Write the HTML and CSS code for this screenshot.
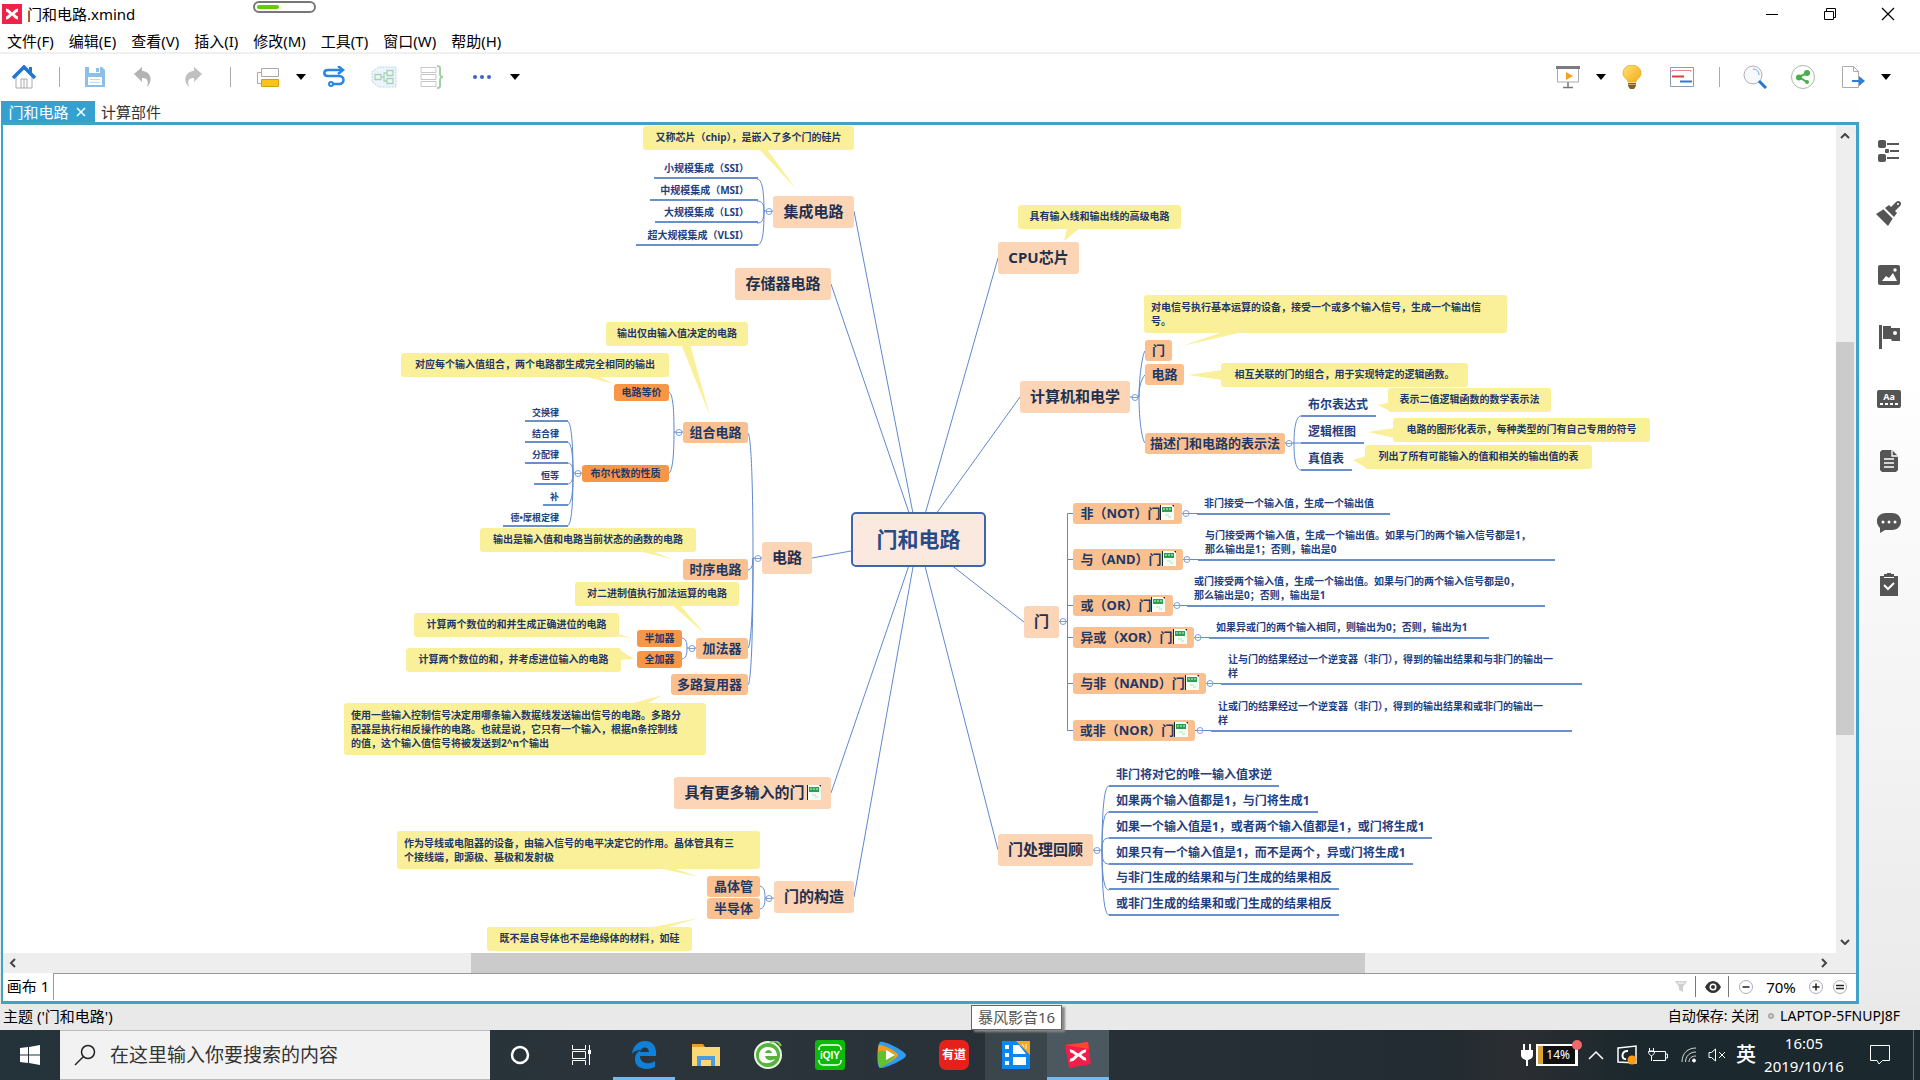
FILE: index.html
```html
<!DOCTYPE html>
<html lang="zh-CN">
<head>
<meta charset="utf-8">
<title>门和电路.xmind</title>
<link rel="stylesheet" href="styles.css">
</head>
<body>
<svg class="defs" width="0" height="0" aria-hidden="true">
  <defs>
    <linearGradient id="bulb" x1="0" y1="0" x2="1" y2="1"><stop offset="0" stop-color="#ffe27a"/><stop offset="1" stop-color="#f5ab12"/></linearGradient>
    <symbol id="sheetIcon" viewBox="0 0 14 15"><path d="M0 0h12l2 2v13H0z" fill="#f4fff6"/><path d="M0 0h1v15H0zM12 0h2v2z" fill="#222"/><path d="M2 2h10v5H2z" fill="#2f9e50"/><path d="M3 4h2M6 4h2M9 4h2" stroke="#d5f5dc"/><path d="M5 10h4M8 12h3" stroke="#b5dfc0"/></symbol>
  </defs>
</svg>

<header class="titlebar">
  <svg class="logo" width="20" height="20" viewBox="0 0 20 20"><path d="M0 0h20v20H0z" fill="#f0224a"/><path d="M4 6c3 0 4 4 6 4s3-4 6-4M4 14c3 0 4-4 6-4s3 4 6 4" fill="none" stroke="#fff" stroke-width="3"/></svg>
  <h1>门和电路.xmind</h1>
  <div class="winctl">
    <button aria-label="最小化"><svg width="14" height="14"><path d="M1 7.500h12" stroke="#000"/></svg></button>
    <button aria-label="还原"><svg width="14" height="14" fill="none" stroke="#000"><path d="M1.500 4.500h9v8h-9zM3.500 4V1.500h9v9h-2"/></svg></button>
    <button aria-label="关闭"><svg width="14" height="14"><path d="M1 1l12 12M13 1L1 13" stroke="#000" stroke-width="1.200"/></svg></button>
  </div>
  <div class="pill"><span></span></div>
</header>

<nav class="menubar">
  <button>文件(F)</button><button>编辑(E)</button><button>查看(V)</button><button>插入(I)</button><button>修改(M)</button><button>工具(T)</button><button>窗口(W)</button><button>帮助(H)</button>
</nav>

<div class="toolbar">
  <button aria-label="主页"><svg width="26" height="24" viewBox="0 0 26 24"><path d="M5 12v11h16V12l-8-8z" fill="#fff" stroke="#aaa"/><path d="M10 23v-9h6v9M13 14v9" fill="none" stroke="#aaa"/><path d="M2 13L13 2l11 11" fill="none" stroke="#1f77d2" stroke-width="3.500"/><path d="M18 2h3v6l-3-3z" fill="#1f77d2"/></svg></button>
  <i class="sep"></i>
  <button aria-label="保存"><svg width="22" height="22" viewBox="0 0 22 22"><path d="M1 1h17l3 3v17H1z" fill="#8dc0e8"/><path d="M5 1h11v6H5zM4 11h14v8H4z" fill="#fff"/><path d="M12 2h3v4h-3z" fill="#8dc0e8"/><path d="M6 13.500h10M6 16.500h10" stroke="#b8d8f0"/></svg></button>
  <button aria-label="撤销"><svg width="22" height="22" viewBox="0 0 22 22"><path d="M2 8l8-7v4c8 0 12 9 5 16 2-7 0-9-5-9v4z" fill="#b3b3b3"/></svg></button>
  <button class="wide" aria-label="重做"><svg width="22" height="22" viewBox="0 0 22 22"><path d="M20 8l-8-7v4C4 5 0 14 7 21c-2-7 0-9 5-9v4z" fill="#c0c0c0"/></svg></button>
  <i class="sep"></i>
  <button class="wide" aria-label="主题"><svg width="24" height="22" viewBox="0 0 24 22"><path d="M5.500 2.500h17v8h-17z" fill="#fff" stroke="#aaa"/><path d="M5 6.500H1.500v11H5" fill="none" stroke="#aaa"/><path d="M5.500 13.500h17v7h-17z" fill="#fcc419" stroke="#d8a00c"/></svg></button>
  <button class="caret" aria-label="主题选项"><svg width="10" height="6"><path d="M0 0h10L5 6z"/></svg></button>
  <button class="wide" aria-label="联系"><svg width="24" height="22" viewBox="0 0 24 22" fill="none" stroke="#2a86e0" stroke-width="2.500"><path d="M20 4H6c-5 0-5 6 0 6h11c6 0 6 8 0 8h-6"/><path d="M16 0l5 4-5 4"/><circle cx="9" cy="18" r="2" fill="#fff" stroke-width="2"/></svg></button>
  <button aria-label="外框"><svg width="26" height="22" viewBox="0 0 26 22"><path d="M1 6l7-5h17v20H8l-7-5z" fill="#edf5fc" stroke="#b7d3ea" stroke-dasharray="2 1"/><path d="M4 8.500h6v5H4zM16 4.500h6v5h-6zM16 12.500h6v5h-6zM10 11h3M16 7h-3v8h3" fill="none" stroke="#a9d3b4" stroke-width="1.300"/></svg></button>
  <button aria-label="概要"><svg width="26" height="24" viewBox="0 0 26 24" fill="none"><path d="M2 2.500h15v5H2zM2 9.500h15v5H2zM2 16.500h15v5H2z" stroke="#c8c8c8"/><path d="M18 1c4 0 3 2 3 6 0 3 0 5 3 5-3 0-3 2-3 5 0 4 1 6-3 6" stroke="#9fd0a2" stroke-width="2"/></svg></button>
  <button class="wide" aria-label="更多"><svg width="20" height="6" fill="#3b62c8"><circle cx="3" cy="3" r="2"/><circle cx="10" cy="3" r="2"/><circle cx="17" cy="3" r="2"/></svg></button>
  <button class="caret" aria-label="更多选项"><svg width="10" height="6"><path d="M0 0h10L5 6z"/></svg></button>
  <span class="grow"></span>
  <button class="wide" aria-label="演示"><svg width="24" height="24" viewBox="0 0 24 24"><path d="M1.500 3h21v14h-21z" fill="#fff" stroke="#aaa"/><path d="M0 1h24v3H0z" fill="#7a7a82"/><path d="M10 7l7 4-7 4z" fill="#f5a21c"/><path d="M12 17v5M7 22.500h10" stroke="#777" stroke-width="1.500"/></svg></button>
  <button class="caret" aria-label="演示选项"><svg width="10" height="6"><path d="M0 0h10L5 6z"/></svg></button>
  <button aria-label="头脑风暴"><svg width="20" height="24" viewBox="0 0 20 24"><path d="M6 17c0-3-5-4-5-9a9 8 0 0 1 18 0c0 5-5 6-5 9z" fill="url(#bulb)" stroke="#e3a21a" stroke-width=".7"/><path d="M6 18h8v3l-2 3H8l-2-3z" fill="#80612a"/><path d="M6 19.500h8" stroke="#c9ac6a"/></svg></button>
  <button class="wide" aria-label="甘特图"><svg width="24" height="22" viewBox="0 0 24 22" fill="none"><path d="M.5 1.500h23v19H.5z" fill="#fff" stroke="#8c9cb0"/><path d="M2 6V4.500h19V6" stroke="#e28a8a"/><path d="M2 10.500h12" stroke="#e23c3c" stroke-width="2"/><path d="M10 15.500h12" stroke="#2b7bd0" stroke-width="2"/></svg></button>
  <i class="sep"></i>
  <button aria-label="搜索"><svg width="24" height="24" viewBox="0 0 24 24" fill="none"><circle cx="10" cy="10" r="9" fill="#f6f9fc" stroke="#b0b0b0"/><path d="M10 4c4 0 6 3 6 6" stroke="#6aa8e4"/><path d="M16 16l7 7" stroke="#1f77d2" stroke-width="3"/></svg></button>
  <button aria-label="分享"><svg width="24" height="24" viewBox="0 0 24 24"><circle cx="12" cy="12" r="11.500" fill="#fff" stroke="#a7b8a7"/><path d="M16 8l-8 4 8 5" fill="none" stroke="#4aae4a" stroke-width="2"/><g fill="#4aae4a"><circle cx="16" cy="8" r="3"/><circle cx="8" cy="12.500" r="3"/><circle cx="16" cy="17" r="2"/></g></svg></button>
  <button class="wide" aria-label="导出"><svg width="24" height="24" viewBox="0 0 24 24"><path d="M1.500 1.500h11l5 5v16h-16z" fill="#fff" stroke="#aaa"/><path d="M12.500 1.500v5h5" fill="none" stroke="#aaa"/><path d="M11 15h7v-4l6 5-6 5v-4h-7z" fill="#2f7fe0"/></svg></button>
  <button class="caret" aria-label="导出选项"><svg width="10" height="6"><path d="M0 0h10L5 6z"/></svg></button>
</div>

<main class="work">
  <div class="editor">
    <div class="tabs">
      <button class="tab on">门和电路<svg width="10" height="10"><path d="M1 1l8 8M9 1L1 9" stroke="#fff" stroke-width="1.500"/></svg></button>
      <button class="tab">计算部件</button>
    </div>
    <div class="frame">
      <div class="viewport">
        <div class="sheet">
          <svg class="links" width="1840" height="960" fill="none" stroke="#5f88cf">
            <path d="M918 539L854 211M918 539L831 284M918 539L812 558M918 539L831 793M918 539L854 897M918 539L998 258M918 539L1020 397M918 539L1024 622M918 539L998 850"/>
            <path d="M773 211h-9M764 211C764 190 762 179 757 179M764 211C764 204 762 201 757 201M764 211C764 220 762 223 757 223M764 211C764 236 762 245 757 245"/>
            <path d="M762 558h-9M753 558C753 480 751 436 748 433M753 558C753 566 751 570 748 570M753 558C753 610 751 645 748 648M753 558C753 640 751 682 748 685"/>
            <path d="M683 432h-9M674 432C674 410 673 394 669 392M674 432C674 452 673 470 669 473"/>
            <path d="M582 473h-9M573 473C573 440 571 421 567 421M573 473C573 452 571 442 567 442M573 473C573 466 571 463 567 463M573 473C573 481 571 484 567 484M573 473C573 496 571 505 567 505M573 473C573 510 571 526 567 526"/>
            <path d="M696 648h-9M687 648C687 642 686 639 682 638M687 648C687 655 686 658 682 659M774 898h-9M765 898C765 891 764 887 760 886M765 898C765 905 764 908 760 909"/>
            <path d="M1130 397h9M1139 397C1139 380 1142 355 1145 351M1139 397C1139 385 1142 378 1145 375M1139 397C1139 420 1142 440 1145 443"/>
            <path d="M1285 443h16M1294 443C1294 428 1296 416 1301 416M1294 443C1294 460 1296 470 1301 470"/>
            <path d="M1059 621.500h8M1073 513.500h-5.500v217h5.500M1067 559.500h6M1067 605.500h6M1067 637.500h6M1067 683.500h6M1182 513.500h22M1183 559.500h22M1173 605.500h22M1194 637.500h22M1206 683.500h22M1195 730.500h22"/>
            <path d="M1093 850h9M1102 850C1102 812 1104 786 1109 786M1102 850C1102 824 1104 812 1109 812M1102 850C1102 841 1104 838 1109 838M1102 850C1102 861 1104 864 1109 864M1102 850C1102 876 1104 890 1109 890M1102 850C1102 890 1104 915 1109 915"/>
            <g class="knobs">
              <path d="M766 211.500a3 3 0 1 0 6 0a3 3 0 1 0-6 0h6M755 558.500a3 3 0 1 0 6 0a3 3 0 1 0-6 0h6M676 432.500a3 3 0 1 0 6 0a3 3 0 1 0-6 0h6M575 473.500a3 3 0 1 0 6 0a3 3 0 1 0-6 0h6M689 648.500a3 3 0 1 0 6 0a3 3 0 1 0-6 0h6M766 898.500a3 3 0 1 0 6 0a3 3 0 1 0-6 0h6"/>
              <path d="M1132 397.500a3 3 0 1 0 6 0a3 3 0 1 0-6 0h6M1286 443.500a3 3 0 1 0 6 0a3 3 0 1 0-6 0h6M1060 621.500a3 3 0 1 0 6 0a3 3 0 1 0-6 0h6M1183 513.500a3 3 0 1 0 6 0a3 3 0 1 0-6 0h6M1184 559.500a3 3 0 1 0 6 0a3 3 0 1 0-6 0h6M1174 605.500a3 3 0 1 0 6 0a3 3 0 1 0-6 0h6M1195 637.500a3 3 0 1 0 6 0a3 3 0 1 0-6 0h6M1207 683.500a3 3 0 1 0 6 0a3 3 0 1 0-6 0h6M1197 730.500a3 3 0 1 0 6 0a3 3 0 1 0-6 0h6M1094 850.500a3 3 0 1 0 6 0a3 3 0 1 0-6 0h6"/>
            </g>
            <path class="tails" d="M759 149l8 0 29 40zM681 344l9 0 20 72zM583 376h14l17 8zM638 551h14l20 8zM672 605h8l25 29zM600 634h18l14 4zM620 650v10l14-1zM630 704h16l17-9zM658 868h15l26 9zM648 928h17l34-10zM1067 228h13l-16 13zM1223 332h20l-61 14zM1222 370v10l-34-5zM1392 402v10l-14-7zM1394 428v10l-26-6zM1366 456v12l-13-8z"/>
          </svg>

          <div class="topic root" style="left:851px;top:512px;width:135px">门和电路</div>

          <div class="note" style="left:643px;top:126px;width:211px">又称芯片（chip），是嵌入了多个门的硅片</div>
          <div class="leaf left" style="left:654px;top:158px;width:104px">小规模集成（SSI）</div>
          <div class="leaf left" style="left:650px;top:180px;width:108px">中规模集成（MSI）</div>
          <div class="leaf left" style="left:655px;top:202px;width:103px">大规模集成（LSI）</div>
          <div class="leaf left" style="left:636px;top:225px;width:122px">超大规模集成（VLSI）</div>
          <div class="topic l1" style="left:773px;top:196px;width:81px">集成电路</div>
          <div class="topic l1" style="left:735px;top:268px;width:96px">存储器电路</div>

          <div class="note" style="left:606px;top:322px;width:142px">输出仅由输入值决定的电路</div>
          <div class="note" style="left:401px;top:353px;width:268px">对应每个输入值组合，两个电路都生成完全相同的输出</div>
          <div class="topic l3" style="left:614px;top:384px;width:55px">电路等价</div>
          <div class="topic l2" style="left:683px;top:422px;width:65px">组合电路</div>
          <div class="topic l3" style="left:582px;top:465px;width:87px">布尔代数的性质</div>
          <div class="leaf left small" style="left:525px;top:404px;width:43px">交换律</div>
          <div class="leaf left small" style="left:525px;top:425px;width:43px">结合律</div>
          <div class="leaf left small" style="left:525px;top:446px;width:43px">分配律</div>
          <div class="leaf left small" style="left:534px;top:467px;width:34px">恒等</div>
          <div class="leaf left small" style="left:543px;top:488px;width:25px">补</div>
          <div class="leaf left small" style="left:503px;top:509px;width:65px">德•摩根定律</div>
          <div class="note" style="left:480px;top:528px;width:216px">输出是输入值和电路当前状态的函数的电路</div>
          <div class="topic l1" style="left:762px;top:542px;width:50px">电路</div>
          <div class="topic l2" style="left:683px;top:559px;width:65px">时序电路</div>
          <div class="note" style="left:575px;top:582px;width:164px">对二进制值执行加法运算的电路</div>
          <div class="note" style="left:414px;top:613px;width:205px">计算两个数位的和并生成正确进位的电路</div>
          <div class="note" style="left:406px;top:648px;width:215px">计算两个数位的和，并考虑进位输入的电路</div>
          <div class="topic l3" style="left:637px;top:630px;width:45px">半加器</div>
          <div class="topic l3" style="left:637px;top:651px;width:45px">全加器</div>
          <div class="topic l2" style="left:696px;top:638px;width:52px">加法器</div>
          <div class="topic l2" style="left:671px;top:674px;width:77px">多路复用器</div>
          <div class="note para" style="left:344px;top:703px;width:362px">使用一些输入控制信号决定用哪条输入数据线发送输出信号的电路。多路分<br>配器是执行相反操作的电路。也就是说，它只有一个输入，根据n条控制线<br>的值，这个输入值信号将被发送到2^n个输出</div>
          <div class="topic l1" style="left:674px;top:777px;width:157px">具有更多输入的门<svg width="14" height="15"><use href="#sheetIcon"/></svg></div>
          <div class="note para" style="left:397px;top:831px;width:363px">作为导线或电阻器的设备，由输入信号的电平决定它的作用。晶体管具有三<br>个接线端，即源极、基极和发射极</div>
          <div class="topic l2" style="left:707px;top:876px;width:53px">晶体管</div>
          <div class="topic l2" style="left:707px;top:898px;width:53px">半导体</div>
          <div class="topic l1" style="left:774px;top:881px;width:80px">门的构造</div>
          <div class="note" style="left:487px;top:927px;width:205px">既不是良导体也不是绝缘体的材料，如硅</div>

          <div class="note" style="left:1018px;top:205px;width:163px">具有输入线和输出线的高级电路</div>
          <div class="topic l1" style="left:998px;top:242px;width:81px">CPU芯片</div>
          <div class="note para" style="left:1144px;top:295px;width:363px">对电信号执行基本运算的设备，接受一个或多个输入信号，生成一个输出信<br>号。</div>
          <div class="topic l2" style="left:1145px;top:340px;width:27px">门</div>
          <div class="topic l2" style="left:1145px;top:364px;width:39px">电路</div>
          <div class="note" style="left:1221px;top:363px;width:247px">相互关联的门的组合，用于实现特定的逻辑函数。</div>
          <div class="topic l1" style="left:1020px;top:381px;width:110px">计算机和电学</div>
          <div class="topic l2" style="left:1145px;top:433px;width:140px">描述门和电路的表示法</div>
          <div class="leaf big" style="left:1301px;top:393px;width:75px">布尔表达式</div>
          <div class="leaf big" style="left:1301px;top:420px;width:63px">逻辑框图</div>
          <div class="leaf big" style="left:1301px;top:447px;width:51px">真值表</div>
          <div class="note" style="left:1388px;top:388px;width:163px">表示二值逻辑函数的数学表示法</div>
          <div class="note" style="left:1393px;top:418px;width:257px">电路的图形化表示，每种类型的门有自己专用的符号</div>
          <div class="note" style="left:1365px;top:445px;width:227px">列出了所有可能输入的值和相关的输出值的表</div>

          <div class="topic l1" style="left:1024px;top:606px;width:35px">门</div>
          <div class="topic l2" style="left:1073px;top:503px;width:109px">非（NOT）门<svg width="14" height="15"><use href="#sheetIcon"/></svg></div>
          <div class="topic l2" style="left:1073px;top:549px;width:110px">与（AND）门<svg width="14" height="15"><use href="#sheetIcon"/></svg></div>
          <div class="topic l2" style="left:1073px;top:595px;width:100px">或（OR）门<svg width="14" height="15"><use href="#sheetIcon"/></svg></div>
          <div class="topic l2" style="left:1073px;top:627px;width:121px">异或（XOR）门<svg width="14" height="15"><use href="#sheetIcon"/></svg></div>
          <div class="topic l2" style="left:1073px;top:673px;width:133px">与非（NAND）门<svg width="14" height="15"><use href="#sheetIcon"/></svg></div>
          <div class="topic l2" style="left:1073px;top:720px;width:122px">或非（NOR）门<svg width="14" height="15"><use href="#sheetIcon"/></svg></div>
          <div class="leaf" style="left:1197px;top:494px;width:193px">非门接受一个输入值，生成一个输出值</div>
          <div class="leaf" style="left:1198px;top:526px;width:357px">与门接受两个输入值，生成一个输出值。如果与门的两个输入信号都是1，<br>那么输出是1；否则，输出是0</div>
          <div class="leaf" style="left:1187px;top:572px;width:358px">或门接受两个输入值，生成一个输出值。如果与门的两个输入信号都是0，<br>那么输出是0；否则，输出是1</div>
          <div class="leaf" style="left:1209px;top:618px;width:280px">如果异或门的两个输入相同，则输出为0；否则，输出为1</div>
          <div class="leaf" style="left:1221px;top:650px;width:361px">让与门的结果经过一个逆变器（非门），得到的输出结果和与非门的输出一<br>样</div>
          <div class="leaf" style="left:1211px;top:697px;width:361px">让或门的结果经过一个逆变器（非门），得到的输出结果和或非门的输出一<br>样</div>

          <div class="topic l1" style="left:998px;top:834px;width:95px">门处理回顾</div>
          <div class="leaf big" style="left:1109px;top:763px;width:170px">非门将对它的唯一输入值求逆</div>
          <div class="leaf big" style="left:1109px;top:789px;width:209px">如果两个输入值都是1，与门将生成1</div>
          <div class="leaf big" style="left:1109px;top:815px;width:323px">如果一个输入值是1，或者两个输入值都是1，或门将生成1</div>
          <div class="leaf big" style="left:1109px;top:841px;width:304px">如果只有一个输入值是1，而不是两个，异或门将生成1</div>
          <div class="leaf big" style="left:1109px;top:866px;width:230px">与非门生成的结果和与门生成的结果相反</div>
          <div class="leaf big" style="left:1109px;top:892px;width:230px">或非门生成的结果和或门生成的结果相反</div>
        </div>
      </div>
      <div class="vscroll">
        <svg width="10" height="6"><path d="M1 5l4-4 4 4" fill="none" stroke="#444" stroke-width="2"/></svg>
        <div class="track"><span></span></div>
        <svg width="10" height="6"><path d="M1 1l4 4 4-4" fill="none" stroke="#444" stroke-width="2"/></svg>
      </div>
      <div class="hscroll">
        <svg width="7" height="10"><path d="M6 1L2 5l4 4" fill="none" stroke="#444" stroke-width="2"/></svg>
        <div class="track"><span></span></div>
        <svg width="7" height="10"><path d="M1 1l4 4-4 4" fill="none" stroke="#444" stroke-width="2"/></svg>
      </div>
      <div class="sheetbar">
        <button class="sheettab">画布 1</button>
        <span class="grow"></span>
        <button aria-label="筛选"><svg width="14" height="14"><path d="M1 1h12L9 7v5l-4-2V7z" fill="#d0d0d0"/><path d="M4 3h6" stroke="#fff"/></svg></button>
        <i class="sep"></i>
        <button class="eye" aria-label="显示"><svg width="16" height="12" viewBox="0 0 16 12"><path d="M0 6c4-8 12-8 16 0-4 8-12 8-16 0z" fill="#333"/><circle cx="8" cy="6" r="3.500" fill="#fff"/><circle cx="8" cy="6" r="2" fill="#333"/></svg></button>
        <i class="sep"></i>
        <button class="zoomout" aria-label="缩小"><svg width="14" height="14" fill="none"><circle cx="7" cy="7" r="6.500" stroke="#aab"/><path d="M3.500 7h7" stroke="#222" stroke-width="1.500"/></svg></button>
        <span class="zoom">70%</span>
        <button class="zoomin" aria-label="放大"><svg width="14" height="14" fill="none"><circle cx="7" cy="7" r="6.500" stroke="#aab"/><path d="M3.500 7h7M7 3.500v7" stroke="#222" stroke-width="1.500"/></svg></button>
        <button aria-label="实际大小"><svg width="14" height="14" fill="none"><circle cx="7" cy="7" r="6.500" stroke="#aab"/><path d="M3 5.500h8M3 8.500h8" stroke="#222" stroke-width="1.500"/></svg></button>
      </div>
    </div>
  </div>
  <aside class="side">
    <button aria-label="大纲"><svg width="24" height="24" viewBox="0 0 24 24" fill="#555"><rect x="1" y="1" width="8" height="8" rx="2"/><rect x="1" y="15" width="8" height="8" rx="2"/><rect x="8" y="10" width="4" height="4" rx="1"/><path d="M10 4h12v2H10zM13 11h9v2h-9zM10 18h12v2H10z"/></svg></button>
    <button aria-label="格式"><svg width="26" height="26" viewBox="0 0 26 26" fill="#555"><path d="M8 9l9 9-5 8L0 14z"/><path d="M9 8l4-3 2 2 5-5c3-3 7 1 4 4l-5 5 2 2-3 4z"/><circle cx="22" cy="4" r="1" fill="#fff"/><path d="M8 9l9 9" stroke="#fff" stroke-width="1.300"/></svg></button>
    <button aria-label="图片"><svg width="22" height="20" viewBox="0 0 22 20"><rect width="22" height="20" rx="2" fill="#555"/><path d="M4 16l4-5 3 2 4-5 4 8z" fill="#fff"/><circle cx="17" cy="5" r="1.700" fill="#fff"/></svg></button>
    <button aria-label="图标"><svg width="24" height="24" viewBox="0 0 24 24" fill="#555"><path d="M2 0h3v24H2zM6 1h8v2h9v13h-8l-1-2H6z"/><circle cx="18" cy="8" r="2" fill="#fff"/></svg></button>
    <button aria-label="标签"><svg class="label" width="24" height="18" viewBox="0 0 24 18"><rect width="24" height="18" rx="2" fill="#555"/><text x="12" y="10" text-anchor="middle" fill="#fff">Aa</text><path d="M3 14h18" stroke="#fff" stroke-width="2" stroke-dasharray="3 2"/></svg></button>
    <button aria-label="备注"><svg width="18" height="22" viewBox="0 0 18 22"><path d="M2 0h10l6 6v14l-2 2H2l-2-2V2z" fill="#555"/><path d="M12 0v6h6M4 9h10M4 13h10M4 17h10" fill="none" stroke="#fff" stroke-width="1.300"/></svg></button>
    <button aria-label="批注"><svg width="24" height="20" viewBox="0 0 24 20"><path d="M9 0h6c12 0 12 17 0 17H8l-5 3v-5C-3 9 0 0 9 0z" fill="#555"/><g fill="#fff"><circle cx="6" cy="9" r="1.500"/><circle cx="12" cy="9" r="1.500"/><circle cx="18" cy="9" r="1.500"/></g></svg></button>
    <button aria-label="任务"><svg width="18" height="23" viewBox="0 0 18 23"><path d="M0 3h4V1h3V0h4v1h3v2h4v20H0z" fill="#555"/><path d="M4 4.500h10" stroke="#fff"/><path d="M4 12l4 4 6-6" fill="none" stroke="#fff" stroke-width="2"/></svg></button>
  </aside>
</main>

<footer class="status">
  <span class="current">主题 ('门和电路')</span>
  <span class="grow"></span>
  <span>自动保存: 关闭</span>
  <i class="dot"></i>
  <span>LAPTOP-5FNUPJ8F</span>
</footer>

<div class="taskbar">
  <button class="start" aria-label="开始"><svg width="20" height="20" viewBox="0 0 20 20" fill="#fff"><path d="M0 3l8-1v7.500H0zM9 2l11-2v9.500H9zM0 10.500h8V18l-8-1zM9 10.500h11V20L9 18z"/></svg></button>
  <label class="search"><svg width="22" height="22" viewBox="0 0 22 22" fill="none" stroke="#222" stroke-width="1.500"><circle cx="14" cy="8" r="6.500"/><path d="M9.500 12.500L1 21"/></svg><input type="text" aria-label="搜索" placeholder="在这里输入你要搜索的内容"></label>
  <button class="app" aria-label="Cortana"><svg width="20" height="20"><circle cx="10" cy="10" r="8" fill="none" stroke="#fff" stroke-width="2.500"/></svg></button>
  <button class="app" aria-label="任务视图"><svg width="20" height="20" fill="none" stroke="#fff"><path d="M.5 0v4.500h13V0M.5 20v-4.500h13V20M.5 6.500v7h13v-7zM17.500 0v5M17.500 9v11"/><path d="M16 5h3v4h-3z" fill="#fff" stroke="none"/></svg></button>
  <button class="app open" aria-label="Edge"><svg width="26" height="28" viewBox="0 0 26 28"><path d="M1 13C2 4 8 0 14 0c8 0 12 6 11 15H9c0 8 9 9 15 5v6c-9 4-20 2-20-8 0-5 3-8 7-9-5 0-8 1-10 4zM9 11h9c0-6-8-6-9 0z" fill="#1181d8"/></svg></button>
  <button class="app" aria-label="文件资源管理器"><svg width="28" height="24" viewBox="0 0 28 24"><path d="M0 1h11l2 3H0z" fill="#e2a325"/><path d="M0 4h28v19H0z" fill="#fbd876"/><path d="M5 23V13h18v10h-4v-6H9v6z" fill="#4a9be0"/></svg></button>
  <button class="app" aria-label="浏览器"><svg width="28" height="28" viewBox="0 0 28 28"><circle cx="14" cy="14" r="13" fill="#57b33e" stroke="#e8f8e0" stroke-width="2"/><path d="M5 15c0-6 4-9 9-9s9 3 9 9H11c1 5 6 5 10 3-2 5-16 7-16-3zM11 12h7c-1-4-6-4-7 0z" fill="#fff"/><path d="M16 1c5-2 9 0 11 4" fill="none" stroke="#7ecb4e" stroke-width="2"/></svg></button>
  <button class="app" aria-label="爱奇艺"><svg class="qiy" width="30" height="30" viewBox="0 0 30 30"><rect width="30" height="30" rx="3" fill="#0db90a"/><rect x="4" y="5" width="22" height="20" rx="4" fill="none" stroke="#fff" stroke-width="1.500"/><path d="M2 10h26v10H2z" fill="#0db90a"/><text x="15" y="19" text-anchor="middle" fill="#fff">iQIY</text></svg></button>
  <button class="app" aria-label="腾讯视频"><svg width="30" height="28" viewBox="0 0 30 28"><path d="M3 1c4-2 25 9 26 13S7 28 3 27 0 3 3 1z" fill="#2e9cf0"/><path d="M2 4c4-1 19 7 19 10S5 26 3 26 0 6 2 4z" fill="#f79a1f"/><path d="M2 10c2-1 16 1 16 4S5 27 3 26s-3-14-1-16z" fill="#62c22e"/><path d="M9 9l9 5-9 5z" fill="#fff"/></svg></button>
  <button class="app" aria-label="有道"><svg class="dao" width="30" height="30" viewBox="0 0 30 30"><rect width="30" height="30" rx="7" fill="#e5211c"/><text x="15" y="19" text-anchor="middle" fill="#fff">有道</text></svg></button>
  <button class="app hover" aria-label="暴风影音16"><svg width="28" height="28" viewBox="0 0 28 28"><path d="M0 0h28v28H0z" fill="#0c86f2"/><path d="M3 4h4v4H3zM3 12h4v4H3zM3 20h4v4H3zM11 16h13v8H11zM11 4h6l7 9H11z" fill="#fff"/><path d="M14 0h14v14z" fill="#f6a821"/><path d="M20 3l2 3M24 3v5" stroke="#fff"/></svg></button>
  <button class="app active" aria-label="XMind"><svg width="26" height="26" viewBox="0 0 26 26"><path d="M0 3l23-3 3 22-22 4z" fill="#f01e48"/><path d="M0 3l23-3 1 7z" fill="#ff4432"/><path d="M5 9c4-1 5 4 8 4s4-5 8-4M5 18c4 1 5-4 8-5s4 5 8 4" fill="none" stroke="#fff" stroke-width="3"/></svg></button>
  <div class="tip">暴风影音16</div>
  <span class="grow"></span>
  <div class="battery">
    <svg width="14" height="22" viewBox="0 0 14 22" fill="#fff"><path d="M3 0h2v6h4V0h2v6h2v5c0 3-2 4-5 5v6H6v-6c-3-1-5-2-5-5V6h2z"/></svg>
    <span class="cell">14%</span><i class="alert"></i>
  </div>
  <button class="tray" aria-label="显示隐藏的图标"><svg width="16" height="10" fill="none" stroke="#fff" stroke-width="1.500"><path d="M1 9l7-7 7 7"/></svg></button>
  <button class="tray" aria-label="显卡"><svg width="20" height="20" viewBox="0 0 20 20"><path d="M1 3l18-2v17l-18-1z" fill="none" stroke="#fff" stroke-width="1.500"/><path d="M11 6c-7-1-7 9-2 8" fill="none" stroke="#fff" stroke-width="2"/><circle cx="15" cy="15" r="4.500" fill="#ff9c12"/></svg></button>
  <button class="tray" aria-label="电源"><svg width="20" height="14" viewBox="0 0 20 14" fill="none" stroke="#fff"><path d="M5 3.500h12.500v9H5M18 6h1.500v4H18M1.500 0v3h4V0M.5 3.500h6c0 3-2 4-3 4s-3-1-3-4zM3.500 8v5"/></svg></button>
  <button class="tray" aria-label="网络"><svg width="16" height="16" viewBox="0 0 16 16" fill="none" stroke="#fff"><path d="M1 15C1 6 7 1 15 1M4.500 15C4.500 9 9 5 15 5M8 15c0-4 3-6 7-6" opacity=".8"/><circle cx="13" cy="13.500" r="1.500" fill="#fff"/></svg></button>
  <button class="tray sound" aria-label="音量"><svg width="18" height="14" viewBox="0 0 18 14" fill="none" stroke="#fff"><path d="M1 4.500h2.500L7.500 1v12L3.500 9.500H1zM11 4l6 6M17 4l-6 6"/></svg></button>
  <button class="ime">英</button>
  <div class="clock"><time>16:05</time><time>2019/10/16</time></div>
  <button class="notify" aria-label="通知"><svg width="20" height="20" viewBox="0 0 20 20" fill="none" stroke="#fff"><path d="M.5.500h19v15h-7L9 19l-2-3.500H.5z"/></svg></button>
</div>
</body>
</html>
```
FILE: styles.css
```css
* { box-sizing: border-box; }
body {
  margin: 0;
  height: 100vh;
  display: flex;
  flex-direction: column;
  overflow: hidden;
  background: #fff;
  color: #000;
  font: 15px/20px "Noto Sans", "Noto Sans CJK SC", sans-serif;
}
button { border: 0; padding: 0; margin: 0; background: none; font: inherit; color: inherit; display: flex; align-items: center; justify-content: center; white-space: nowrap; }
svg { display: block; flex: none; }
.defs { position: absolute; }
.grow { flex: 1; }

/* title and menus */
.titlebar { position: relative; display: flex; align-items: center; height: 29px; padding: 0 3px 2px 2px; gap: 5px; flex: none; }
.titlebar h1 { margin: 0; font-size: 15px; font-weight: 400; flex: 1; }
.winctl { display: flex; }
.winctl button { width: 58px; height: 27px; }
.pill { position: absolute; left: 253px; top: 1px; width: 63px; height: 12px; padding: 2px; border: 2px solid #777; border-radius: 6px; background: #fff; }
.pill span { display: block; width: 22px; height: 4px; border-radius: 2px; background: #6c0; }
.menubar { display: flex; gap: 15px; height: 25px; padding-left: 7px; border-bottom: 2px solid #f0f0f0; flex: none; }

/* toolbar */
.toolbar { display: flex; align-items: center; height: 47px; padding: 0 27px 2px 0; flex: none; }
.toolbar button { width: 48px; height: 36px; }
.toolbar .wide { width: 52px; }
.toolbar .caret { width: 14px; }
.toolbar .sep { width: 1px; height: 20px; margin: 0 11px; background: #aaa; }

/* editor */
.work { flex: 1; min-height: 0; display: flex; background: linear-gradient(#fff, #fff 30%, #eaeaea); }
.editor { flex: 1; min-width: 0; display: flex; flex-direction: column; padding-left: 1px; }
.tabs { display: flex; height: 21px; flex: none; color: #333; background: #fefefe; }
.tab { gap: 7px; padding: 0 8px 0 6px; }
.tab.on { background: #35a1d1; color: #fff; width: 94px; }
.frame {
  flex: 1;
  min-height: 0;
  display: grid;
  grid-template: minmax(0, 1fr) 20px 28px / minmax(0, 1fr) 20px;
  border: solid #3ea3c6;
  border-width: 3px 3px 3px 2px;
  background: #fff;
}
.viewport { position: relative; overflow: hidden; }
.vscroll, .hscroll { display: flex; align-items: center; background: #eee; }
.vscroll { flex-direction: column; grid-row: 1 / 3; grid-column: 2; padding: 8px 2px 28px 0; }
.hscroll { grid-row: 2; grid-column: 1; padding: 0 8px 0 6px; }
.track { flex: 1; display: flex; }
.vscroll .track { flex-direction: column; width: 18px; padding: 203px 0 0; }
.vscroll .track span { height: 393px; background: #cbcbcb; }
.hscroll .track { height: 20px; padding-left: 455px; }
.hscroll .track span { width: 894px; background: #cbcbcb; }
.sheetbar { grid-row: 3; grid-column: 1 / 3; display: flex; align-items: center; border-top: 1px solid #999; padding: 0 9px 2px 0; background: #fff; }
.sheetbar .sheettab { width: 51px; height: 27px; margin-top: -1px; background: #fff; border-right: 1px solid #999; }
.sheetbar .sep { width: 1px; height: 21px; background: #777; margin-left: 7px; }
.sheetbar .eye { margin-left: 9px; }
.sheetbar .zoomout { margin-left: 10px; }
.sheetbar .zoom { width: 56px; text-align: center; }
.sheetbar .zoomin { margin-right: 10px; }

/* mind map: the sheet is scrolled inside the viewport */
.sheet { position: absolute; left: -3px; top: -125px; width: 1840px; height: 960px; font-weight: 700; color: #1f3864; white-space: nowrap; }
.links, .topic, .note, .leaf { position: absolute; }
.links { left: 0; top: 0; }
.knobs { fill: #fff; stroke: #7ba0dd; }
.tails { fill: #fbf09a; stroke: none; }
.topic { display: flex; align-items: center; justify-content: center; padding-bottom: 2px; border-radius: 3px; }
.root { height: 55px; font-size: 21px; border: 2px solid #3f66ad; border-radius: 5px; background: #fbe8de; color: #284a86; }
.l1 { height: 32px; gap: 2px; font-size: 15px; background: #fbd5b5; color: #22304f; }
.l2 { height: 21px; font-size: 13px; background: #fac090; }
.l3 { height: 17px; font-size: 10px; background: #f79646; }
.note { padding: 4px 0 6px; border-radius: 3px; background: #fbf09a; font-size: 10px; line-height: 14px; text-align: center; }
.para { padding: 5px 0 5px 7px; text-align: left; }
.leaf { padding: 2px 7px 3px; border-bottom: 2px solid #6a90cc; font-size: 10px; line-height: 14px; color: #1f4080; }
.left { text-align: right; padding: 3px 9px 2px 0; }
.small { padding: 2px 9px 0 0; font-size: 9px; }
.big { padding: 5px 7px 3px; font-size: 12px; }

/* right side panel */
.side { width: 61px; display: flex; flex-direction: column; align-items: center; gap: 21px; padding: 29px 2px 0 0; }
.side button { width: 48px; height: 41px; flex: none; }
.label { font: 700 9px "Noto Sans", sans-serif; }

/* status line */
.status { display: flex; align-items: center; height: 26px; padding: 0 20px 2px 3px; background: #e9e9e9; flex: none; font-size: 14px; }
.current { font-size: 15px; }
.dot { width: 6px; height: 6px; margin: 0 6px 0 9px; border: 2px solid #aaa; border-radius: 50%; }

/* taskbar */
.taskbar { position: relative; display: flex; height: 50px; flex: none; background: linear-gradient(90deg, #243239, #2b343a 40%, #222c32 75%, #2b2e31 79%, #1b282e 85%); color: #fff; }
.start { width: 60px; }
.search { width: 430px; display: flex; align-items: center; gap: 14px; padding-left: 14px; background: #f2f2f2; border: solid #bbb; border-width: 1px 0; }
.search input { flex: 1; min-width: 0; border: 0; outline: 0; background: none; font: 19px/28px "Noto Sans", "Noto Sans CJK SC", sans-serif; padding: 0; }
.search input::placeholder { color: #333; opacity: 1; }
.app { width: 62px; border: solid transparent; border-width: 3px 0; }
.app:nth-of-type(2) { margin-left: -1px; }
.app.open { border-bottom-color: #76b9ed; background-clip: padding-box; }
.app.hover { background: #3b464c; }
.app.active { background: #4b585f; border-bottom-color: #76b9ed; }
.qiy { font: 700 10px "Liberation Sans", sans-serif; }
.dao { font: 700 12px "Noto Sans CJK SC", sans-serif; }
.tip { position: absolute; left: 971px; top: -25px; height: 25px; width: 91px; border: 1px solid #666; background: #fff; color: #555; text-align: center; line-height: 22px; box-shadow: 3px 2px 2px #888; white-space: nowrap; }
.battery { position: relative; display: flex; align-items: center; gap: 2px; width: 60px; }
.cell { width: 42px; height: 22px; border: 2px solid #fff; border-right-width: 3px; background: linear-gradient(90deg, #d9a433 5px, #111 5px); font-size: 12px; line-height: 18px; text-align: right; padding-right: 5px; }
.alert { position: absolute; right: -2px; top: 10px; width: 10px; height: 10px; border-radius: 50%; background: #f0686c; }
.tray { width: 31px; }
.sound { width: 26px; }
.ime { width: 32px; font-size: 20px; font-weight: 500; }
.clock { width: 84px; display: flex; flex-direction: column; align-items: center; justify-content: center; line-height: 23px; }
.notify { width: 68px; margin-right: 6px; border-right: 1px solid #667; }
```
